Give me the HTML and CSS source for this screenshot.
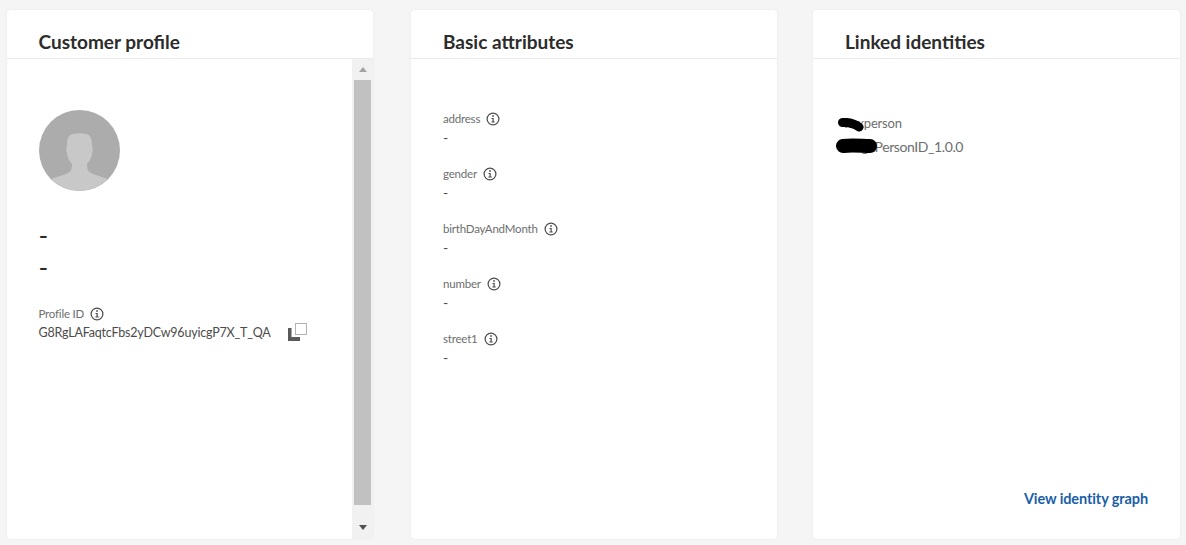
FILE: index.html
```html
<!DOCTYPE html>
<html lang="en">
<head>
<meta charset="utf-8">
<title>Profile</title>
<link rel="stylesheet" href="styles.css">
</head>
<body>
<svg class="defs" width="0" height="0" aria-hidden="true">
  <symbol id="info" viewBox="0 0 14 14">
    <circle cx="7" cy="7" r="5.9" fill="none" stroke="#4b4b4b" stroke-width="1.2"/>
    <rect x="6.2" y="3.2" width="1.6" height="1.6" fill="#4b4b4b"/>
    <path d="M5.5 6h2.2v3.6h1v1H5.4v-1h1.1V7H5.5z" fill="#4b4b4b"/>
  </symbol>
</svg>
<main class="page">
  <section class="card card-profile">
    <header class="card-head"><h2>Customer profile</h2></header>
    <div class="scroll-wrap">
      <div class="profile-body">
        <svg class="avatar" viewBox="0 0 81 81" aria-hidden="true">
          <circle cx="40.5" cy="40.5" r="40.5" fill="#acacac"/>
          <path d="M12 69l15-5c4-2 6-3 6-10-3-3-5-8-5-11-1-1-1-6 0-7 0-7 1-11 6-12 4-1 9-1 13 0 5 1 6 5 6 12 1 1 1 6 0 7 0 3-2 8-5 11 0 7 2 8 6 10l15 5A40.500 40.500 0 0 1 12 69z" fill="#c8c8c8"/>
        </svg>
        <div class="dash name-dash">-</div>
        <div class="dash name-dash second">-</div>
        <div class="label-row profile-label"><span>Profile ID</span><svg class="info"><use href="#info"/></svg></div>
        <div class="id-row">
          <span>G8RgLAFaqtcFbs2yDCw96uyicgP7X_T_QA</span>
          <svg class="copy" viewBox="0 0 19 18" aria-hidden="true">
            <rect x="7.500" y="0.500" width="11" height="11" fill="none" stroke="#666" stroke-dasharray="1 1"/>
            <path d="M0 5h3.500v9h8.500v4H0z" fill="#5a5a5a"/>
          </svg>
        </div>
      </div>
      <div class="scrollbar">
        <div class="arrow up"></div>
        <div class="thumb"></div>
        <div class="arrow down"></div>
      </div>
    </div>
  </section>

  <section class="card card-basic">
    <header class="card-head"><h2>Basic attributes</h2></header>
    <div class="attrs">
      <div class="attr"><div class="label-row"><span>address</span><svg class="info"><use href="#info"/></svg></div><div class="value">-</div></div>
      <div class="attr"><div class="label-row"><span>gender</span><svg class="info"><use href="#info"/></svg></div><div class="value">-</div></div>
      <div class="attr"><div class="label-row"><span>birthDayAndMonth</span><svg class="info"><use href="#info"/></svg></div><div class="value">-</div></div>
      <div class="attr"><div class="label-row"><span>number</span><svg class="info"><use href="#info"/></svg></div><div class="value">-</div></div>
      <div class="attr"><div class="label-row"><span>street1</span><svg class="info"><use href="#info"/></svg></div><div class="value">-</div></div>
    </div>
  </section>

  <section class="card card-linked">
    <header class="card-head"><h2>Linked identities</h2></header>
    <div class="linked-body">
      <div class="identities">
        <div class="id-type">xxxperson</div>
        <div class="id-name">xxgxPersonID_1.0.0</div>
        <svg class="scribble" viewBox="0 0 50 40" aria-hidden="true">
          <path d="M6.500 4.500C14 4 19 6 23 9" stroke="#000" stroke-width="9" stroke-linecap="round" fill="none"/>
          <path d="M7 28C15 27 27 28 34 28" stroke="#000" stroke-width="14" stroke-linecap="round" fill="none"/>
        </svg>
      </div>
      <a class="graph-link" href="#">View identity graph</a>
    </div>
  </section>
</main>
</body>
</html>
```
FILE: styles.css
```css
* { box-sizing: border-box; }
html, body { margin: 0; height: 100%; }
body {
  background: #f5f5f5;
  font-family: Lato, "Noto Sans", sans-serif;
  color: #4b4b4b;
  overflow: hidden;
}
.defs { display: block; height: 0; }
.page {
  display: flex;
  height: 545px;
  padding: 10px 6px 6px 7px;
}
.card {
  width: 366px;
  height: 529px;
  background: #fff;
  border-radius: 4px;
  box-shadow: 0 0 2px rgba(0, 0, 0, 0.08);
  display: flex;
  flex-direction: column;
}
.card-basic { margin-left: 38px; }
.card-linked { margin-left: 36px; width: 367px; }
.card-head {
  height: 49px;
  border-bottom: 1px solid #eaeaea;
  padding: 20px 32px 0;
}
.card-profile .card-head { padding-left: 31.5px; }
.card-head h2 {
  margin: 0;
  font-size: 19px;
  line-height: 24px;
  font-weight: 700;
  color: #2c2c2c;
}
.scroll-wrap { flex: 1; display: flex; min-height: 0; }
.profile-body { flex: 1; padding: 51px 31.5px 0; }
.avatar { display: block; width: 81px; height: 81px; margin-left: 0.5px; }
.dash { font-size: 26px; line-height: 32px; color: #2c2c2c; font-weight: 400; }
.name-dash { margin-top: 28px; }
.name-dash.second { margin-top: 0; }
.label-row {
  display: flex;
  align-items: center;
  gap: 6px;
  font-size: 11.5px;
  letter-spacing: -0.2px;
  line-height: 16px;
  color: #6e6e6e;
}
.profile-label { margin-top: 23px; }
.info { width: 14px; height: 14px; flex: none; }
.id-row {
  display: flex;
  align-items: flex-start;
  gap: 17px;
  font-size: 12.5px;
  letter-spacing: -0.2px;
  line-height: 16px;
  color: #4b4b4b;
  white-space: nowrap;
  margin-top: 3px;
}
.copy { width: 19px; height: 18px; flex: none; margin-top: -2px; }
.scrollbar {
  width: 21px;
  background: #f1f1f1;
  display: flex;
  flex-direction: column;
  align-items: center;
  padding: 0 2px;
}
.thumb { flex: 1; width: 17px; background: #c1c1c1; }
.arrow { height: 21px; width: 100%; position: relative; flex: none; }
.arrow.down { height: 34px; }
.arrow::after {
  content: "";
  position: absolute;
  left: 50%;
  margin-left: -4px;
  border-left: 4px solid transparent;
  border-right: 4px solid transparent;
}
.arrow.up::after { top: 8px; border-bottom: 5px solid #a3a3a3; }
.arrow.down::after { top: 20px; border-top: 5px solid #505050; }
.attrs { padding: 52px 32px 0; display: flex; flex-direction: column; gap: 20px; }
.value { font-size: 14px; line-height: 17px; margin-top: 2px; color: #4b4b4b; }
.linked-body { flex: 1; display: flex; flex-direction: column; padding: 53px 32px 30px; }
.identities { position: relative; flex: 1; line-height: 23px; color: #6e6e6e; }
.id-type { font-size: 13px; letter-spacing: -0.2px; }
.id-name { font-size: 14px; letter-spacing: -0.4px; margin-left: 3px; }
.scribble { position: absolute; left: -9px; top: 6px; width: 50px; height: 40px; }
.graph-link {
  align-self: flex-end;
  font-size: 14.5px;
  letter-spacing: -0.1px;
  line-height: 20px;
  font-weight: 700;
  color: #1a5ea8;
  text-decoration: none;
}
```
